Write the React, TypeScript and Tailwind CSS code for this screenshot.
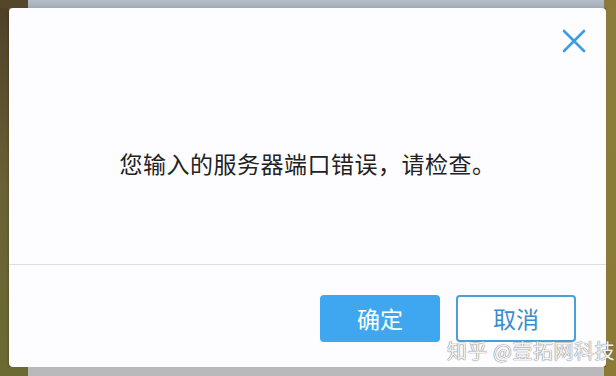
import React from 'react';

const CloseIcon: React.FC = () => (
    <svg width="24" height="24" viewBox="0 0 24 24" fill="none">
        <path d="M2 2 L22 22 M22 2 L2 22" stroke="#3d9de4" strokeWidth="2.6" strokeLinecap="round" />
    </svg>
);

export default function App() {
    return (
        <div
            className="relative flex flex-col w-[616px] h-[376px] overflow-hidden bg-[#6d6437]"
            style={{ fontFamily: '"Noto Sans CJK SC", "Noto Sans", sans-serif' }}
        >
            {/* top strip of the wallpaper */}
            <div className="flex h-[8px] shrink-0">
                <div className="w-[28px] bg-[#54462b]" />
                <div className="flex-1 bg-gradient-to-b from-[#b5bec8] to-[#a1abb6]" />
                <div className="w-[12px] bg-[#8a7a3c]" />
            </div>

            {/* middle row: left edge, dialog, right edge */}
            <div className="flex flex-1 min-h-0">
                <div className="w-[9px] bg-gradient-to-b from-[#4f4128] via-[#6a6136] to-[#6b6a33]" />
                <div className="flex-1 flex flex-col bg-[#fdfcfe] rounded-[4px] shadow-[0_2px_3px_rgba(0,0,0,0.35)]">
                    {/* message area */}
                    <div className="relative h-[257px] border-b border-[#dedde0]">
                        <button className="absolute right-[20px] top-[21px] p-0">
                            <CloseIcon />
                        </button>
                        <p className="pt-[140px] text-center text-[23px] leading-[30px] tracking-[0.5px] text-[#222222]">
                            您输入的服务器端口错误，请检查。
                        </p>
                    </div>
                    {/* footer */}
                    <div className="flex justify-end gap-[16px] pt-[30px] pr-[30px]">
                        <button className="w-[120px] h-[47px] rounded-[4px] bg-[#3fa7ef] text-white text-[23px] leading-none">
                            确定
                        </button>
                        <button className="w-[120px] h-[47px] rounded-[4px] border-2 border-[#4a9fd9] bg-white text-[#3a8ccc] text-[23px] leading-none">
                            取消
                        </button>
                    </div>
                </div>
                <div className="w-[10px] bg-gradient-to-b from-[#8c7c3c] to-[#8a7a35]" />
            </div>

            {/* bottom strip */}
            <div className="flex h-[9px] shrink-0">
                <div className="w-[28px] bg-[#6b6a33]" />
                <div className="flex-1 bg-[#b9b9bb]" />
                <div className="w-[12px] bg-[#8a7a35]" />
            </div>

            {/* watermark */}
            <div className="absolute left-[447px] top-[338px] text-[20px] leading-[26px] text-white/90 tracking-[0.5px] [text-shadow:0_0_1px_#777,0_0_1px_#777]">
                知乎 @壹拓网科技
            </div>
        </div>
    );
}
